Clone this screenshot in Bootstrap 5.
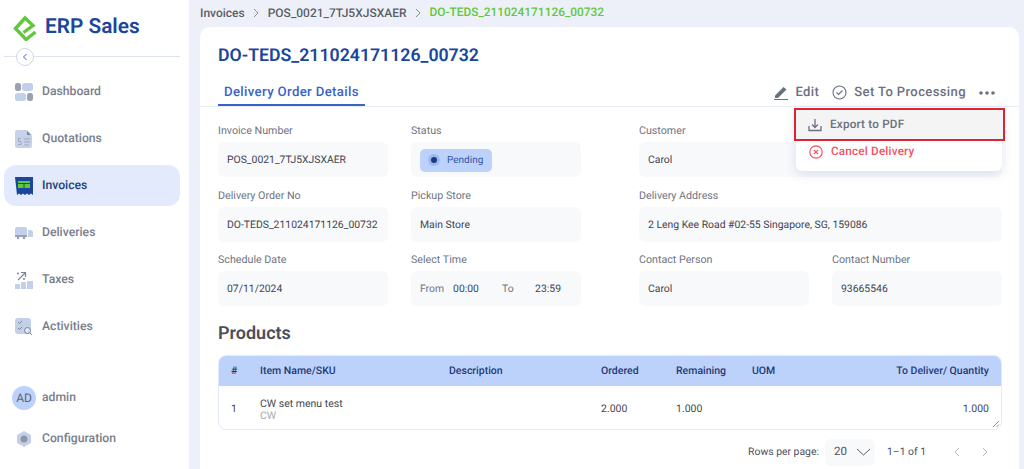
<!DOCTYPE html>
<html lang="en">
<head>
<meta charset="UTF-8">
<meta name="viewport" content="width=device-width, initial-scale=1.0">
<title>ERP Sales - Delivery Order</title>
<link href="https://cdn.jsdelivr.net/npm/bootstrap@5.3.0/dist/css/bootstrap.min.css" rel="stylesheet">
<style>
  html, body { height: 100%; overflow: hidden; }
  body { background: #edf0f8; font-family: Roboto, "Liberation Sans", sans-serif; color: #3f4350; font-size: 11px; text-rendering: geometricPrecision; }
  .app-shell { height: 469px; }
  .side-bar { width: 189px; flex: none; background: #fff; height: 469px; }
  .brand-row { height: 56px; padding: 0 0 0 13px; gap: 8px; color: #1a469c; font-size: 20.800px; font-weight: 600; }
  .side-rule { height: 1px; background: #dfe4f3; margin: 0 9px 0 4px; position: relative; }
  .collapse-btn { position: absolute; left: 12px; top: -8px; width: 18px; height: 18px; border-radius: 50%; background: #fff; border: 1px solid #cdd6ee; display: flex; align-items: center; justify-content: center; }
  .side-links { padding: 0 9px 0 4px; margin-top: 14px; }
  .side-link { height: 41px; margin-bottom: 6px; padding-left: 11px; gap: 9px; color: #787d8b; font-size: 12.200px; font-weight: 500; border-radius: 12px; text-decoration: none; }
  .side-link svg { flex: none; }
  .side-link.is-on { background: #e2eafb; color: #1f3f80; }
  .side-foot { margin-top: 24px; padding: 0 9px 0 4px; }
  .avatar-dot { width: 24px; height: 24px; flex: none; border-radius: 50%; background: #bdd2fb; color: #5d6475; font-size: 12px; font-weight: 400; margin-left: -3px; margin-right: -3px; }
  .main-col { flex: 1; min-width: 0; padding-left: 11px; padding-right: 5px; }
  .crumbs { height: 27px; gap: 8px; font-size: 12px; font-weight: 500; color: #5c5f66; padding-bottom: 2px; }
  .crumb-on { color: #5fc93a; font-size: 11.900px; }
  .detail-sheet { background: #fff; border-radius: 10px 10px 0 0; height: 442px; position: relative; padding-top: 19px; }
  .sheet-title { font-size: 17.700px; font-weight: 600; color: #1a469c; margin: 0 0 0 18px; line-height: 20px; }
  .tab-row { height: 31px; margin-top: 10px; border-bottom: 1px solid #e8ecf6; padding: 0 24px 0 18px; }
  .tab-on { color: #3a62cb; font-size: 13.200px; font-weight: 500; letter-spacing: .35px; padding: 0 6px; height: 30px; line-height: 33px; border-bottom: 2px solid #3a62cb; }
  .tab-actions { gap: 7px; color: #6a7080; font-size: 13px; font-weight: 500; letter-spacing: .4px; padding-top: 3px; }
  .edit-label { margin-right: 6px; }
  .set-label { margin-right: 6px; }
  .info-grid { padding: 17px 17px 0 18px; }
  .info-row { gap: 23px; margin-bottom: 11.500px; }
  .info-cell { width: 170px; flex: none; }
  .info-cell.wide { width: 363px; margin-left: 35px; }
  .info-label { color: #6e7482; font-size: 10.700px; line-height: 13px; margin-bottom: 5px; }
  .info-box { background: #f8f9fb; border-radius: 6px; height: 35px; padding: 1px 9px 0; color: #3f4350; font-size: 10.400px; white-space: nowrap; }
  .status-pill { background: #bdd2fb; border-radius: 5px; height: 23px; width: 72px; padding: 0 0 0 8px; gap: 7px; color: #2c55a8; font-size: 10px; }
  .status-dot { width: 12px; height: 12px; border-radius: 50%; background: #9db8ee; display: flex; align-items: center; justify-content: center; }
  .status-dot::after { content: ""; width: 6px; height: 6px; border-radius: 50%; background: #1a3a85; }
  .time-lbl { color: #6e7482; }
  .time-from { margin-right: 9px; }
  .time-to { margin-left: 23px; }
  .time-end { margin-right: 11px; }
  .sec-title { font-size: 18px; font-weight: 600; color: #4a4e5a; margin: 18px 0 11px 18px; line-height: 20px; }
  .items-wrap { margin: 0 17px 0 18px; border: 1px solid #e3e9f7; border-radius: 8px; overflow: hidden; position: relative; }
  .items-table { margin: 0; table-layout: fixed; width: 100%; font-size: 10.500px; }
  .items-table th { background: #bdd2fb; color: #1f3a78; font-weight: 500; height: 30px; padding: 0 12px; border: 0; vertical-align: middle; }
  .items-table td { height: 43px; padding: 3px 12px 0; border: 0; color: #444851; vertical-align: middle; line-height: 12px; }
  .sku-sub { color: #a4a9b5; display: block; line-height: 11px; }
  .grip-mark { position: absolute; right: 1px; bottom: 1px; }
  .pager-row { height: 44px; font-size: 10.400px; color: #4c505c; padding-right: 30px; }
  .rows-select { background: #f8f9fb; border-radius: 6px; width: 50px; height: 27px; margin: 0 12px 0 6px; padding-left: 9px; gap: 9px; font-size: 11.500px; }
  .pager-arrow { margin-left: 22px; }
  .pager-arrow.first-arrow { margin-left: 27px; }
  .action-menu { position: absolute; left: 596px; top: 80px; width: 206px; height: 64px; background: #fff; border-radius: 6px; box-shadow: 0 3px 12px rgba(70, 90, 150, .16); z-index: 5; }
  .menu-line { height: 31px; gap: 8px; padding: 1px 0 0 13px; font-size: 11.700px; font-weight: 500; letter-spacing: .2px; }
  .menu-line.is-hot { background: #f4f4f4; color: #6a7080; outline: 2px solid #dc2433; outline-offset: -1px; width: 209px; margin-left: -1px; margin-top: 2px; }
  .menu-line.is-red { color: #f5525f; height: 22px; }
</style>
</head>
<body>
<div class="app-shell d-flex">
  <aside class="side-bar d-flex flex-column">
    <div class="brand-row d-flex align-items-center">
      <svg width="24" height="26" viewBox="0 0 24 26" fill="none" stroke="#5fc93a" stroke-width="3.400"><path d="M22.500 17 13 24.500 2.500 13.500 12 3 20 10.500 10.500 17.500"/></svg>
      <span>ERP Sales</span>
    </div>
    <div class="side-rule"><span class="collapse-btn"><svg width="8" height="8" viewBox="0 0 8 8" fill="none" stroke="#3a62cb" stroke-width="1"><path d="M5.500 1 2.500 4 5.500 7"/></svg></span></div>
    <nav class="side-links">
      <a class="side-link d-flex align-items-center" href="#"><svg width="18" height="18" viewBox="0 0 18 18"><rect x="0" y="0" width="6" height="8" rx="2.500" fill="#9aa1b3"/><rect x="7" y="0" width="11" height="8" rx="2.500" fill="#c3d0ea"/><rect x="0" y="10" width="11" height="8" rx="2.500" fill="#c3d0ea"/><rect x="12" y="10" width="6" height="8" rx="2.500" fill="#9aa1b3"/></svg>Dashboard</a>
      <a class="side-link d-flex align-items-center" href="#"><svg width="18" height="18" viewBox="0 0 18 18"><path d="M2 0h10l5 5v11a2 2 0 0 1-2 2H2a2 2 0 0 1-2-2V2a2 2 0 0 1 2-2z" fill="#c6d2ea"/><path d="M12 1l4 4h-4z" fill="#7d8496"/><path d="M9 9h6M9 12h6M9 15h5M6 8.500H3.500v3h2.500v3H3" stroke="#a0a8bb" fill="none"/></svg>Quotations</a>
      <a class="side-link is-on d-flex align-items-center" href="#"><svg width="18" height="18" viewBox="0 0 18 18"><path d="M0 0h18v18l-2-1.500-2 1.500-2-1.500-2 1.500-2-1.500-2 1.500-2-1.500-2 1.500z" fill="#1a469c"/><rect x="3" y="4" width="12" height="7" fill="#5fc93a"/><path d="M3 6.500h12M9 6.500V11" stroke="#1a469c"/></svg>Invoices</a>
      <a class="side-link d-flex align-items-center" href="#"><svg width="18" height="18" viewBox="0 0 18 18"><path d="M2 3h8a2 2 0 0 1 2 2v8H0V5a2 2 0 0 1 2-2z" fill="#c3d0ea"/><path d="M13 6h2a3 3 0 0 1 3 3v4h-5z" fill="#c3d0ea"/><rect x="0" y="11" width="12" height="2" fill="#9aa1b3"/><circle cx="3" cy="14" r="1.300" fill="#9aa1b3"/><circle cx="9" cy="14" r="1.300" fill="#9aa1b3"/></svg>Deliveries</a>
      <a class="side-link d-flex align-items-center" href="#"><svg width="18" height="18" viewBox="0 0 18 18"><rect x="0" y="13" width="5" height="5" fill="#c3d0ea"/><rect x="6" y="11" width="5" height="7" fill="#c3d0ea"/><rect x="12" y="10" width="6" height="8" fill="#c3d0ea"/><path d="M3 9 10 2M6 1.500h4.500V6" stroke="#7d8496" stroke-width="1.200" fill="none"/><circle cx="3" cy="2.500" r="1" fill="#7d8496"/><circle cx="9" cy="8" r="1" fill="#7d8496"/></svg>Taxes</a>
      <a class="side-link d-flex align-items-center" href="#"><svg width="18" height="18" viewBox="0 0 18 18"><rect x="0" y="0" width="16" height="16" rx="3" fill="#c3d0ea"/><path d="M3 4l1.500 1.500L7 3M3 10l1.500 1.500L7 9" stroke="#7d8496" fill="none"/><circle cx="12.500" cy="12.500" r="3" fill="#dfe6f5" stroke="#7d8496"/><path d="M14.700 14.700 17 17" stroke="#7d8496"/></svg>Activities</a>
    </nav>
    <div class="side-foot">
      <div class="side-link d-flex align-items-center mb-0"><span class="avatar-dot d-flex align-items-center justify-content-center">AD</span><span>admin</span></div>
      <a class="side-link d-flex align-items-center" href="#"><svg width="18" height="18" viewBox="0 0 18 18"><path d="M9 1l7 4v8l-7 4-7-4V5z" fill="#c3d0ea"/><circle cx="9" cy="9" r="3.500" fill="#8f96a8"/></svg>Configuration</a>
    </div>
  </aside>

  <main class="main-col">
    <div class="crumbs d-flex align-items-center">
      <span>Invoices</span>
      <svg width="7" height="10" viewBox="0 0 7 10" fill="none" stroke="#8a8d94"><path d="M1 1l4 4-4 4"/></svg>
      <span>POS_0021_7TJ5XJSXAER</span>
      <svg width="7" height="10" viewBox="0 0 7 10" fill="none" stroke="#8a8d94"><path d="M1 1l4 4-4 4"/></svg>
      <span class="crumb-on">DO-TEDS_211024171126_00732</span>
    </div>

    <section class="detail-sheet">
      <h1 class="sheet-title">DO-TEDS_211024171126_00732</h1>
      <div class="tab-row d-flex justify-content-between">
        <div class="tab-on">Delivery Order Details</div>
        <div class="tab-actions d-flex align-items-center">
          <svg width="15" height="15" viewBox="0 0 15 15" fill="#6a7080"><path d="M1 10.500 9.500 2l3 2.500L4 13H1z"/><rect x="0" y="14" width="14" height="1"/></svg>
          <span class="edit-label">Edit</span>
          <svg width="15" height="15" viewBox="0 0 15 15" fill="none" stroke="#6a7080" stroke-width="1.100"><circle cx="7.500" cy="7.500" r="6.500"/><path d="M4.500 7.500l2 2 4-4"/></svg>
          <span class="set-label">Set To Processing</span>
          <svg width="16" height="4" viewBox="0 0 16 4" fill="#6a7080"><circle cx="2" cy="2" r="1.800"/><circle cx="8" cy="2" r="1.800"/><circle cx="14" cy="2" r="1.800"/></svg>
        </div>
      </div>

      <div class="action-menu">
        <div class="menu-line is-hot d-flex align-items-center">
          <svg width="14" height="14" viewBox="0 0 14 14" fill="none" stroke="#6a7080" stroke-width="1.300"><path d="M1 8v4.500h12V8M7 1v8M4 6.500 7 9.500 10 6.500"/></svg>
          <span>Export to PDF</span>
        </div>
        <div class="menu-line is-red d-flex align-items-center">
          <svg width="14" height="14" viewBox="0 0 14 14" fill="none" stroke="#f5525f" stroke-width="1.200"><circle cx="7" cy="7" r="6.200"/><path d="M4.800 4.800l4.400 4.400M9.200 4.800l-4.400 4.400"/></svg>
          <span>Cancel Delivery</span>
        </div>
      </div>

      <div class="info-grid">
        <div class="info-row d-flex">
          <div class="info-cell"><div class="info-label">Invoice Number</div><div class="info-box d-flex align-items-center">POS_0021_7TJ5XJSXAER</div></div>
          <div class="info-cell"><div class="info-label">Status</div><div class="info-box d-flex align-items-center"><span class="status-pill d-flex align-items-center"><span class="status-dot"></span>Pending</span></div></div>
          <div class="info-cell wide"><div class="info-label">Customer</div><div class="info-box d-flex align-items-center">Carol</div></div>
        </div>
        <div class="info-row d-flex">
          <div class="info-cell"><div class="info-label">Delivery Order No</div><div class="info-box d-flex align-items-center">DO-TEDS_211024171126_00732</div></div>
          <div class="info-cell"><div class="info-label">Pickup Store</div><div class="info-box d-flex align-items-center">Main Store</div></div>
          <div class="info-cell wide"><div class="info-label">Delivery Address</div><div class="info-box d-flex align-items-center">2 Leng Kee Road #02-55 Singapore, SG, 159086</div></div>
        </div>
        <div class="info-row d-flex">
          <div class="info-cell"><div class="info-label">Schedule Date</div><div class="info-box d-flex align-items-center">07/11/2024</div></div>
          <div class="info-cell"><div class="info-label">Select Time</div><div class="info-box d-flex align-items-center"><span class="time-lbl time-from">From</span><span>00:00</span><span class="time-lbl time-to">To</span><span class="ms-auto time-end">23:59</span></div></div>
          <div class="info-cell wide d-flex">
            <div class="info-cell"><div class="info-label">Contact Person</div><div class="info-box d-flex align-items-center">Carol</div></div>
            <div class="info-cell ms-auto"><div class="info-label">Contact Number</div><div class="info-box d-flex align-items-center">93665546</div></div>
          </div>
        </div>
      </div>

      <h2 class="sec-title">Products</h2>
      <div class="items-wrap">
        <table class="table items-table">
          <colgroup><col style="width:29px"><col style="width:189px"><col style="width:152px"><col style="width:75px"><col style="width:76px"><col style="width:60px"><col></colgroup>
          <thead><tr><th>#</th><th>Item Name/SKU</th><th>Description</th><th>Ordered</th><th>Remaining</th><th>UOM</th><th class="text-end">To Deliver/ Quantity</th></tr></thead>
          <tbody><tr><td>1</td><td>CW set menu test<span class="sku-sub">CW</span></td><td></td><td>2.000</td><td>1.000</td><td></td><td class="text-end">1.000</td></tr></tbody>
        </table>
        <svg class="grip-mark" width="8" height="8" viewBox="0 0 8 8" stroke="#6f7483" stroke-width=".8"><path d="M1 7l6-6M4.500 7 7 4.500"/></svg>
      </div>
      <div class="pager-row d-flex align-items-center justify-content-end">
        <span>Rows per page:</span>
        <span class="rows-select d-flex align-items-center">20 <svg width="15" height="8" viewBox="0 0 15 8" fill="none" stroke="#5c606c"><path d="M1 1l6.500 6 6.500-6"/></svg></span>
        <span>1–1 of 1</span>
        <svg class="pager-arrow first-arrow" width="7" height="10" viewBox="0 0 7 10" fill="none" stroke="#b5b8c0"><path d="M6 1 2 5l4 4"/></svg>
        <svg class="pager-arrow" width="7" height="10" viewBox="0 0 7 10" fill="none" stroke="#b5b8c0"><path d="M1 1l4 4-4 4"/></svg>
      </div>
    </section>
  </main>
</div>
<script src="https://cdn.jsdelivr.net/npm/bootstrap@5.3.0/dist/js/bootstrap.bundle.min.js"></script>
</body>
</html>
